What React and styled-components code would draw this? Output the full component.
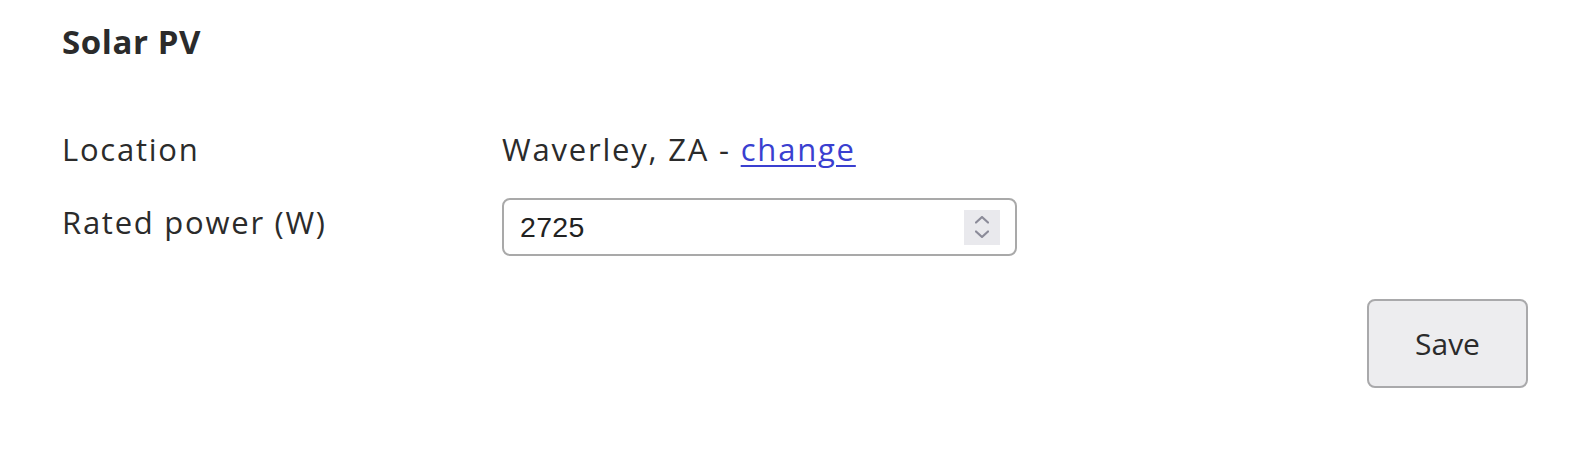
import styled, { createGlobalStyle } from "styled-components";

const GlobalStyle = createGlobalStyle`
  html, body {
    margin: 0;
    background: #ffffff;
  }
  body {
    font-family: "Open Sans", "Noto Sans", sans-serif;
    color: #2b2b2b;
  }
`;

export default function App() {
  return (
    <>
      <GlobalStyle />
      <SettingsPanel>
        <Title>Solar PV</Title>
        <FormGrid>
          <Label>Location</Label>
          <Value>
            Waverley, ZA - <ChangeLink href="#">change</ChangeLink>
          </Value>

          <Label>Rated power (W)</Label>
          <NumberField>
            <NumberInput type="text" defaultValue="2725" />
            <Spinner aria-hidden="true">
              <svg width="14" height="22" viewBox="0 0 14 22">
                <path d="M1 6.5 L7 1 L13 6.5" fill="none" stroke="#8b8b99" strokeWidth="2.2" strokeLinecap="round" strokeLinejoin="round" />
                <path d="M1 15.5 L7 21 L13 15.5" fill="none" stroke="#8b8b99" strokeWidth="2.2" strokeLinecap="round" strokeLinejoin="round" />
              </svg>
            </Spinner>
          </NumberField>
        </FormGrid>
        <Actions>
          <SaveButton>Save</SaveButton>
        </Actions>
      </SettingsPanel>
    </>
  );
}

const SettingsPanel = styled.div`
  display: flex;
  flex-direction: column;
  padding: 18px 62px 0 62px;
`;

const Title = styled.h2`
  margin: 0 0 59px 0;
  font-size: 33px;
  line-height: 48px;
  font-weight: 700;
  letter-spacing: 0.6px;
  color: #2b2b2b;
`;

const FormGrid = styled.div`
  display: grid;
  grid-template-columns: 440px 515px;
  row-gap: 25px;
  align-items: start;
`;

const Label = styled.div`
  font-size: 31px;
  line-height: 48px;
  letter-spacing: 1.75px;
  color: #2b2b2b;
`;

const Value = styled.div`
  font-size: 31px;
  line-height: 48px;
  letter-spacing: 1.8px;
  color: #2b2b2b;
`;

const ChangeLink = styled.a`
  color: #3a3fd0;
  text-decoration: underline;
  text-decoration-thickness: 2px;
  text-underline-offset: 4px;
`;

const NumberField = styled.div`
  display: flex;
  align-items: center;
  box-sizing: border-box;
  width: 515px;
  height: 58px;
  border: 2px solid #a9a9a9;
  border-radius: 8px;
  padding: 0 15px 0 16px;
  background: #ffffff;
`;

const NumberInput = styled.input`
  flex: 1;
  min-width: 0;
  border: none;
  outline: none;
  padding: 0;
  background: transparent;
  font-family: "Liberation Sans", Arial, sans-serif;
  font-size: 28.5px;
  letter-spacing: 0.3px;
  color: #222222;
`;

const Spinner = styled.div`
  display: flex;
  align-items: center;
  justify-content: center;
  width: 36px;
  height: 35px;
  background: #e9e9ed;
`;

const Actions = styled.div`
  display: flex;
  justify-content: flex-end;
  margin-top: 43px;
`;

const SaveButton = styled.button`
  box-sizing: border-box;
  width: 161px;
  height: 89px;
  border: 2px solid #a9a9ab;
  border-radius: 8px;
  background: #ededef;
  font-family: "Open Sans", "Noto Sans", sans-serif;
  font-size: 30px;
  color: #2b2b2b;
  cursor: pointer;
`;
